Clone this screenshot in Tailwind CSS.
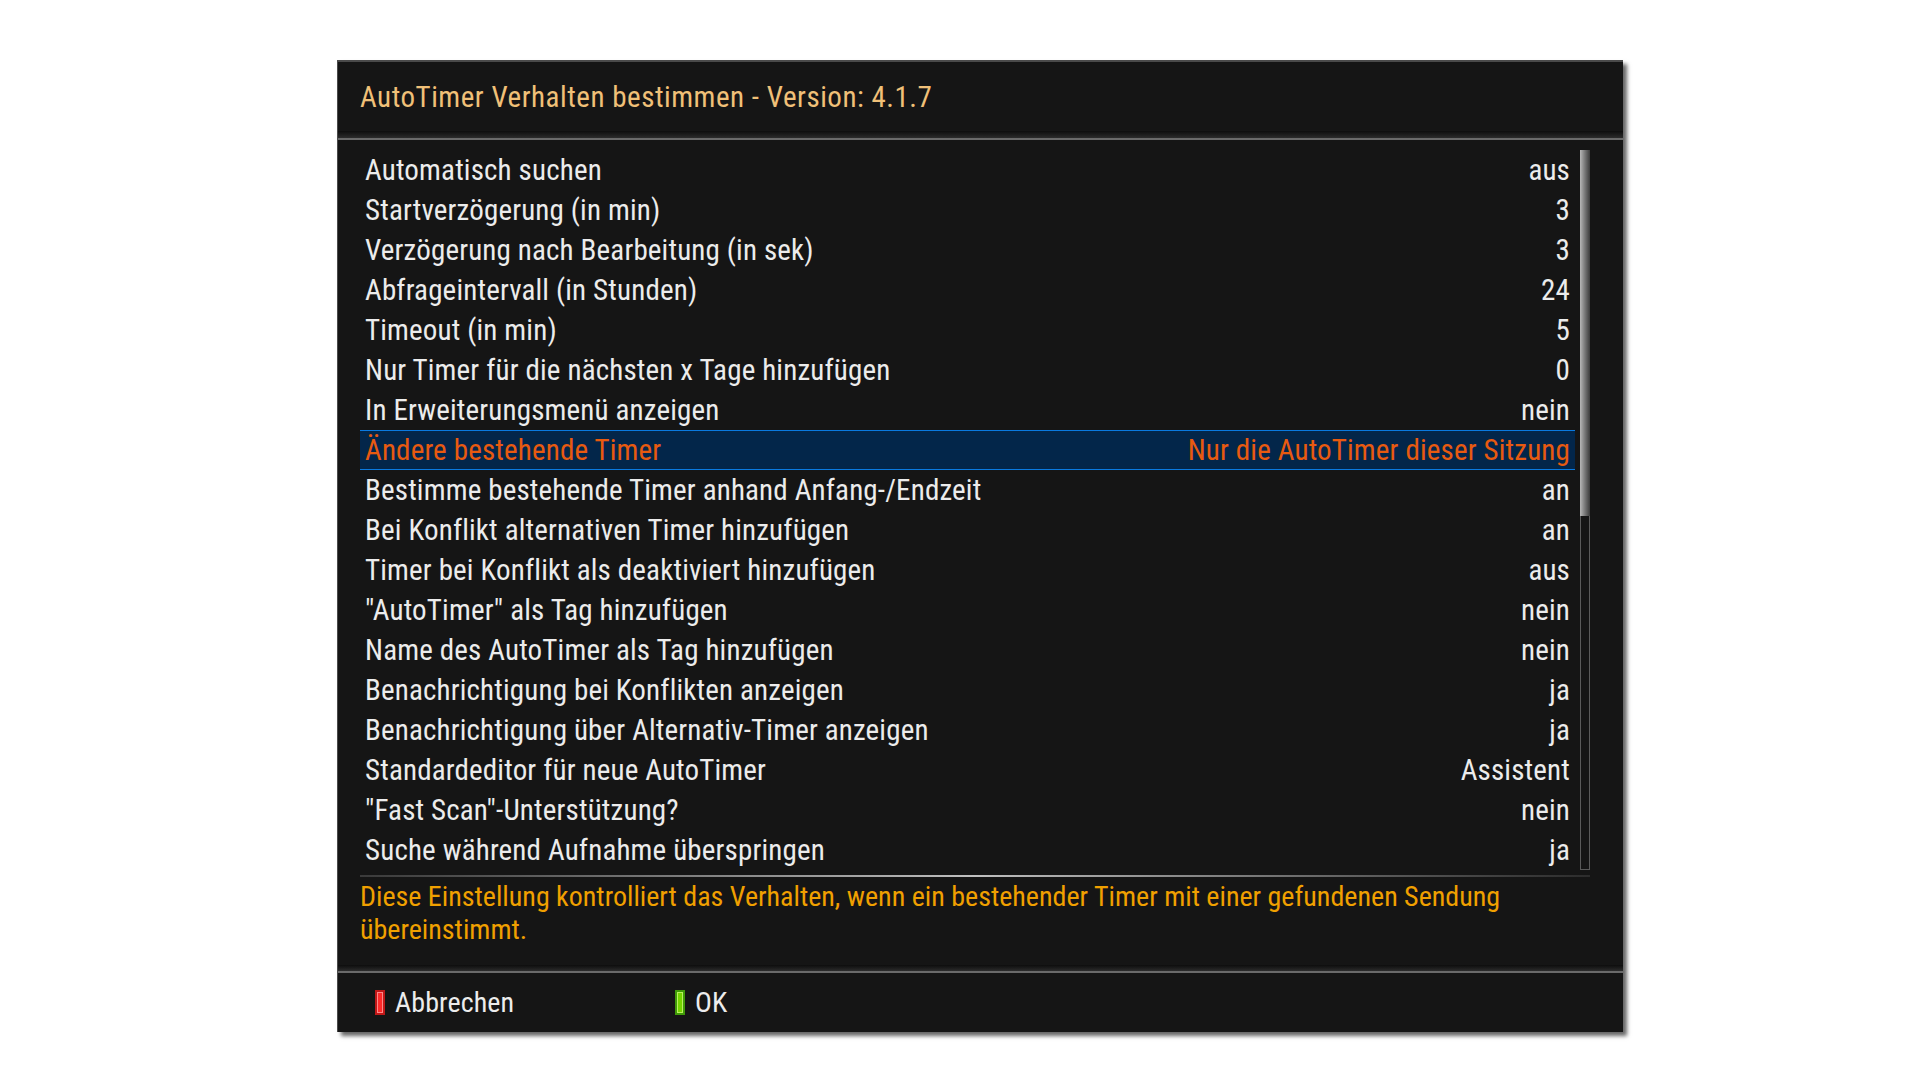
<!DOCTYPE html>
<html lang="de">
<head>
<meta charset="UTF-8">
<title>AutoTimer</title>
<script src="https://cdn.jsdelivr.net/npm/@tailwindcss/browser@4"></script>
</head>
<body class="bg-white font-['Roboto',sans-serif] font-stretch-condensed">
<div class="w-[1920px] h-[1080px] pt-[60px] pl-[337px]">
  <div class="w-[1286px] h-[972px] bg-[#151515] border-t-2 border-l border-[#4a4a4a] shadow-[4px_4px_4px_rgba(0,0,0,0.6)]">
    <!-- title -->
    <div class="h-[69px] pl-[22px] pt-[17px]">
      <h1 class="text-[29px] tracking-[0.53px] leading-[36px] text-[#f0c078]">AutoTimer Verhalten bestimmen - Version: 4.1.7</h1>
    </div>
    <div class="h-[7px] bg-gradient-to-b from-[#0d0d0d] to-[#2c2c2c]"></div>
    <!-- settings -->
    <div class="h-[827px] border-t-2 border-[#6a6a6a] pl-[22px] pt-[10px]">
      <div class="flex w-[1230px]">
        <ul class="w-[1215px] text-[29px] tracking-[0.16px] text-[#ececec]">
          <li class="flex justify-between h-[40px] leading-[40px] pl-[5px] pr-[5px]"><span>Automatisch suchen</span><span>aus</span></li>
          <li class="flex justify-between h-[40px] leading-[40px] pl-[5px] pr-[5px]"><span>Startverzögerung (in min)</span><span>3</span></li>
          <li class="flex justify-between h-[40px] leading-[40px] pl-[5px] pr-[5px]"><span>Verzögerung nach Bearbeitung (in sek)</span><span>3</span></li>
          <li class="flex justify-between h-[40px] leading-[40px] pl-[5px] pr-[5px]"><span>Abfrageintervall (in Stunden)</span><span>24</span></li>
          <li class="flex justify-between h-[40px] leading-[40px] pl-[5px] pr-[5px]"><span>Timeout (in min)</span><span>5</span></li>
          <li class="flex justify-between h-[40px] leading-[40px] pl-[5px] pr-[5px]"><span>Nur Timer für die nächsten x Tage hinzufügen</span><span>0</span></li>
          <li class="flex justify-between h-[40px] leading-[40px] pl-[5px] pr-[5px]"><span>In Erweiterungsmenü anzeigen</span><span>nein</span></li>
          <li class="flex justify-between h-[40px] leading-[38px] pl-[5px] pr-[5px] bg-[#03264a] border-y border-[#0a7ae0] text-[#e85a10]"><span>Ändere bestehende Timer</span><span>Nur die AutoTimer dieser Sitzung</span></li>
          <li class="flex justify-between h-[40px] leading-[40px] pl-[5px] pr-[5px]"><span>Bestimme bestehende Timer anhand Anfang-/Endzeit</span><span>an</span></li>
          <li class="flex justify-between h-[40px] leading-[40px] pl-[5px] pr-[5px]"><span>Bei Konflikt alternativen Timer hinzufügen</span><span>an</span></li>
          <li class="flex justify-between h-[40px] leading-[40px] pl-[5px] pr-[5px]"><span>Timer bei Konflikt als deaktiviert hinzufügen</span><span>aus</span></li>
          <li class="flex justify-between h-[40px] leading-[40px] pl-[5px] pr-[5px]"><span>"AutoTimer" als Tag hinzufügen</span><span>nein</span></li>
          <li class="flex justify-between h-[40px] leading-[40px] pl-[5px] pr-[5px]"><span>Name des AutoTimer als Tag hinzufügen</span><span>nein</span></li>
          <li class="flex justify-between h-[40px] leading-[40px] pl-[5px] pr-[5px]"><span>Benachrichtigung bei Konflikten anzeigen</span><span>ja</span></li>
          <li class="flex justify-between h-[40px] leading-[40px] pl-[5px] pr-[5px]"><span>Benachrichtigung über Alternativ-Timer anzeigen</span><span>ja</span></li>
          <li class="flex justify-between h-[40px] leading-[40px] pl-[5px] pr-[5px]"><span>Standardeditor für neue AutoTimer</span><span>Assistent</span></li>
          <li class="flex justify-between h-[40px] leading-[40px] pl-[5px] pr-[5px]"><span>"Fast Scan"-Unterstützung?</span><span>nein</span></li>
          <li class="flex justify-between h-[40px] leading-[40px] pl-[5px] pr-[5px]"><span>Suche während Aufnahme überspringen</span><span>ja</span></li>
        </ul>
        <!-- scrollbar -->
        <div class="ml-[5px] w-[10px] h-[720px] border border-[#5a5a5a]">
          <div class="h-[366px] -m-px bg-gradient-to-r from-[#b8b8b8] to-[#3c3c3c]"></div>
        </div>
      </div>
      <div class="mt-[5px] w-[1230px] h-[2px] bg-gradient-to-r from-[#3a3a3a] via-[#c0c0c0] to-[#2c2c2c]"></div>
      <p class="mt-[3px] w-[1200px] text-[28px] leading-[33px] text-[#f0a000]">Diese Einstellung kontrolliert das Verhalten, wenn ein bestehender Timer mit einer gefundenen Sendung übereinstimmt.</p>
    </div>
    <div class="h-[6px] bg-gradient-to-b from-[#0d0d0d] to-[#2c2c2c]"></div>
    <!-- buttons -->
    <div class="h-[61px] border-t-2 border-[#6a6a6a] flex items-center text-[28px] tracking-[0.1px] text-[#ececec]">
      <div class="flex items-center w-[300px] ml-[37px]">
        <span class="w-[10px] h-[25px] bg-[#ff2a2a] border-2 border-[#c01818] shadow-[inset_0_0_0_1px_#ff8888]"></span><span class="ml-[10px]">Abbrechen</span>
      </div>
      <div class="flex items-center">
        <span class="w-[10px] h-[25px] bg-[#74d400] border-2 border-[#3f9a08] shadow-[inset_0_0_0_1px_#b8f060]"></span><span class="ml-[10px]">OK</span>
      </div>
    </div>
  </div>
</div>
</body>
</html>
